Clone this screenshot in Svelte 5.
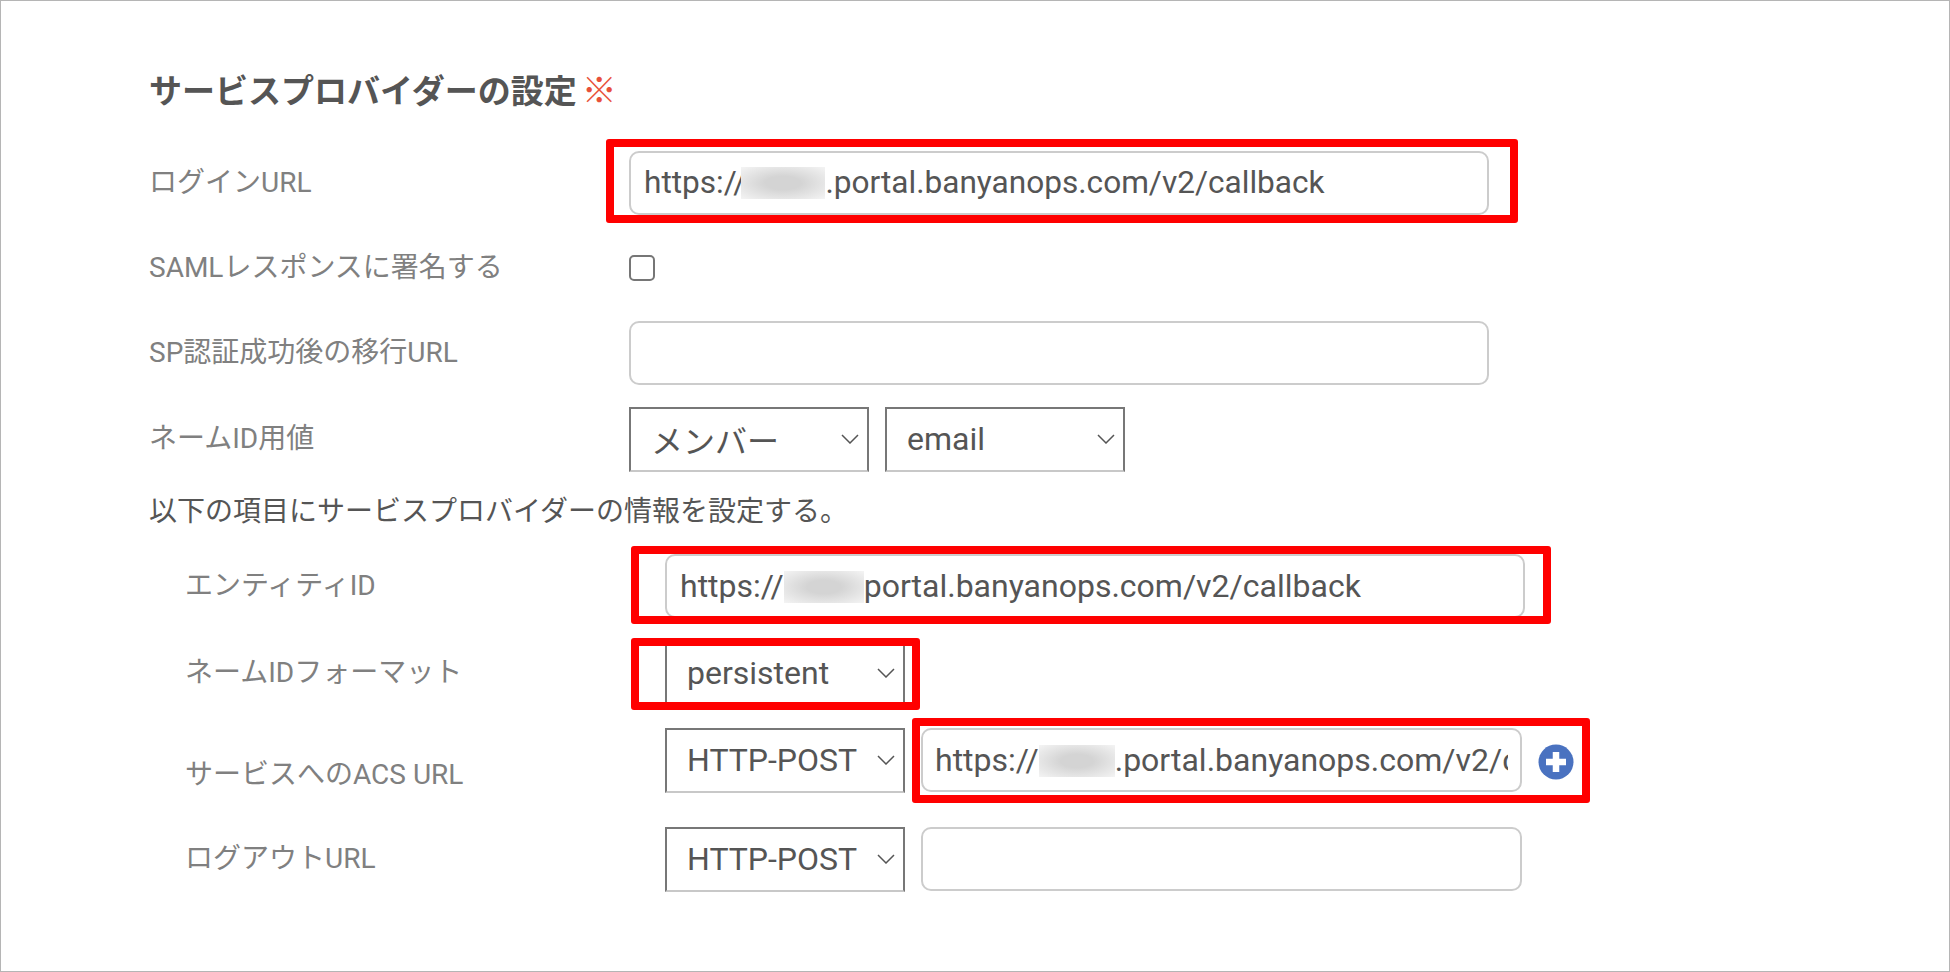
<script>
	// annotation frames drawn over the form
	const frames = [
		{ left: 606, top: 139, width: 912, height: 84 },
		{ left: 631, top: 546, width: 920, height: 78 },
		{ left: 631, top: 638, width: 289, height: 72 },
		{ left: 912, top: 718, width: 678, height: 85 }
	];
</script>

{#snippet chooser(value)}
	<div class="select">
		<span>{value}</span>
		<svg class="chevron" viewBox="0 0 18 10" width="18" height="10">
			<path d="M1 1l8 8 8-8" fill="none" stroke="#555" stroke-width="1.5" />
		</svg>
	</div>
{/snippet}

{#snippet url(blurWidth, dot = true, cls = '')}
	<div class="value {cls}">https://<span class="blur" style="width:{blurWidth}px"></span>{dot ? '.' : ''}portal.banyanops.com/v2/callback</div>
{/snippet}

<div class="page">
	<h2 class="title">サービスプロバイダーの設定<span class="required">※</span></h2>

	<div class="row">
		<div class="label">ログインURL</div>
		<div class="field wide">{@render url(84, true, 'tight')}</div>
	</div>
	<div class="row">
		<div class="label">SAMLレスポンスに署名する</div>
		<div class="checkbox"></div>
	</div>
	<div class="row">
		<div class="label">SP認証成功後の移行URL</div>
		<div class="field wide"></div>
	</div>
	<div class="row names">
		<div class="label">ネームID用値</div>
		<div class="controls">
			{@render chooser('メンバー')}
			{@render chooser('email')}
		</div>
	</div>

	<p class="note">以下の項目にサービスプロバイダーの情報を設定する。</p>

	<div class="row sub first">
		<div class="label">エンティティID</div>
		<div class="field wide">{@render url(80, false)}</div>
	</div>
	<div class="row sub second">
		<div class="label">ネームIDフォーマット</div>
		{@render chooser('persistent')}
	</div>
	<div class="row sub third">
		<div class="label lower">サービスへのACS URL</div>
		<div class="controls">
			{@render chooser('HTTP-POST')}
			<div class="field narrow">{@render url(76)}</div>
			<svg class="add" viewBox="0 0 36 36" width="36" height="36">
				<circle cx="18" cy="18" r="17.5" fill="#4a72c0" />
				<path d="M18 8v20M8 18h20" stroke="#fff" stroke-width="6.5" />
			</svg>
		</div>
	</div>
	<div class="row sub fourth">
		<div class="label">ログアウトURL</div>
		<div class="controls">
			{@render chooser('HTTP-POST')}
			<div class="field narrow"></div>
		</div>
	</div>

	{#each frames as f}
		<div
			class="frame"
			style="left:{f.left}px;top:{f.top}px;width:{f.width}px;height:{f.height}px"
		></div>
	{/each}
</div>

<style>
	:global(body) {
		margin: 0;
		background: #fff;
	}

	.page {
		position: relative;
		box-sizing: border-box;
		width: 1950px;
		height: 972px;
		padding: 68px 0 0 148px;
		border: 1px solid #b5b5b5;
		font-family: Roboto, 'Noto Sans CJK JP', sans-serif;
		color: #555;
		overflow: hidden;
	}

	.title {
		margin: 0 0 36px;
		font-size: 33px;
		line-height: 46px;
		font-weight: 700;
	}

	.required {
		margin-left: 5px;
		font-size: 35px;
		color: #e8503a;
		font-weight: 400;
	}

	.row {
		display: flex;
		align-items: center;
		height: 64px;
		margin-bottom: 21px;
	}

	.names {
		margin-top: 22px;
	}

	.label {
		flex: 0 0 480px;
		margin-top: -6px;
		font-size: 28px;
		color: #808080;
	}

	.lower {
		margin-top: 24px;
	}

	.sub {
		margin-left: 36px;
	}

	.first,
	.second,
	.third,
	.fourth {
		margin-bottom: 0;
	}

	.second {
		margin-top: 23px;
	}

	.third {
		margin-top: 23px;
	}

	.fourth {
		margin-top: 35px;
	}

	.field {
		box-sizing: border-box;
		height: 64px;
		padding: 0 13px;
		border: 2px solid #ccc;
		border-radius: 10px;
		font-size: 32px;
		line-height: 60px;
		background: #fff;
	}

	.value {
		white-space: nowrap;
		overflow: hidden;
	}

	.tight {
		font-size: 31.6px;
	}

	.tight .blur {
		margin-left: -5px;
	}

	.wide {
		width: 860px;
	}

	.narrow {
		width: 601px;
		padding: 0 12px;
	}

	.blur {
		display: inline-block;
		height: 32px;
		vertical-align: -6px;
		background: radial-gradient(ellipse at center, #d4d4d4 30%, #f4f4f4 100%);
	}

	.checkbox {
		box-sizing: border-box;
		width: 26px;
		height: 26px;
		border: 2px solid #767676;
		border-radius: 5px;
	}

	.controls {
		display: flex;
		align-items: center;
		gap: 16px;
	}

	.select {
		box-sizing: border-box;
		display: flex;
		align-items: center;
		justify-content: space-between;
		width: 240px;
		height: 65px;
		padding: 0 8px 0 20px;
		border: 2px solid #777;
		border-bottom-color: #c8c8c8;
		font-size: 32px;
	}

	.chevron {
		flex: none;
	}

	.add {
		margin: 3px 0 0 0;
	}

	.note {
		margin: 7px 0 22px;
		font-size: 28px;
		line-height: 40px;
		color: #555;
	}

	.frame {
		position: absolute;
		box-sizing: border-box;
		border: 8px solid #ff0000;
		border-radius: 3px;
		margin: -1px 0 0 -1px;
	}
</style>
